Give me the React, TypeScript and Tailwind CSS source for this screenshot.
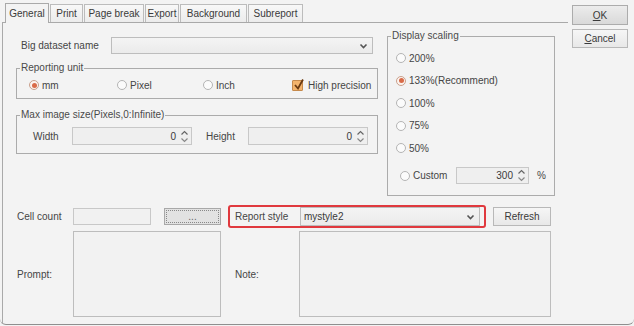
import React from "react";

const Chevron = () => (
  <svg width="9" height="6" viewBox="0 0 9 6">
    <path d="M1.5 1.5 L4.5 4.5 L7.5 1.5" fill="none" stroke="#555" strokeWidth="1.6" />
  </svg>
);

const Spin = () => (
  <svg width="9" height="15" viewBox="0 0 9 15">
    <path d="M1.5 5.5 L4.5 2.5 L7.5 5.5" fill="none" stroke="#666" strokeWidth="1.2" />
    <path d="M1.5 9.5 L4.5 12.5 L7.5 9.5" fill="none" stroke="#888" strokeWidth="1.2" />
  </svg>
);

function Radio({ checked, label, className = "" }: { checked?: boolean; label: string; className?: string }) {
  return (
    <div className={"flex items-center gap-[3px] h-[14px] " + className}>
      <span
        className={
          checked
            ? "w-[10px] h-[10px] rounded-full border border-[#c9a08c] bg-[#fbf3ef] flex items-center justify-center"
            : "w-[10px] h-[10px] rounded-full border border-[#b4b4b4] bg-[#fbfbfb]"
        }
      >
        {checked && <span className="w-[5px] h-[5px] rounded-full bg-[#d96b48]" />}
      </span>
      <span>{label}</span>
    </div>
  );
}

function Tab({ label, w, active }: { label: string; w: string; active?: boolean }) {
  return (
    <div
      className={
        active
          ? `${w} h-[20px] -mb-px relative z-10 border-t border-l border-r border-[#a9a9a9] bg-[#f3f3f3] flex items-center justify-center text-[#3a3a3a]`
          : `${w} h-[18px] border-t border-l border-r border-[#bcbcbc] bg-gradient-to-b from-[#f8f8f8] to-[#ececec] flex items-center justify-center text-[#3a3a3a]`
      }
    >
      {label}
    </div>
  );
}

function Select({ w, h, value = "" }: { w: string; h: string; value?: string }) {
  return (
    <div className={`${w} ${h} border border-[#bdbdbd] bg-gradient-to-b from-[#f4f4f4] to-[#ebebeb] flex items-center justify-between pl-[3px] pr-[4px] text-[#3a3a3a]`}>
      <span>{value}</span>
      <Chevron />
    </div>
  );
}

function SpinBox({ w, value }: { w: string; value: string }) {
  return (
    <div className={`${w} h-[18px] border border-[#c8c8c8] bg-[#efefef] flex items-center justify-end pr-[2px] gap-[4px] text-[#3a3a3a]`}>
      <span>{value}</span>
      <Spin />
    </div>
  );
}

function Group({ title, className = "", children }: { title: string; className?: string; children: React.ReactNode }) {
  return (
    <fieldset className={"border border-[#ababab] " + className}>
      <legend className="ml-[3px] px-[1px] leading-[12px] text-[#4a4a4a]">{title}</legend>
      {children}
    </fieldset>
  );
}

export default function App() {
  return (
    <div className="w-[634px] h-[326px] bg-[#f3f3f3] font-['Liberation_Sans',Arial,sans-serif] text-[10px] text-[#454545]">
      <div className="w-[634px] h-[325px] flex border-b border-[#8f8f8f] rounded-b-[6px]">
        {/* left: tabs + panel */}
        <div className="w-[568px] pl-[2px] flex flex-col">
          <div className="h-[22px] pt-[3px] pl-[3px] flex items-end gap-[1px]">
            <Tab label="General" w="w-[44px]" active />
            <Tab label="Print" w="w-[33px]" />
            <Tab label="Page break" w="w-[60px]" />
            <Tab label="Export" w="w-[34px]" />
            <Tab label="Background" w="w-[67px]" />
            <Tab label="Subreport" w="w-[55px]" />
          </div>
          <div className="flex-1 border-t border-l border-[#a9a9a9] flex flex-col">
            {/* top section */}
            <div className="flex items-start">
              <div className="ml-[13px] w-[362px] flex flex-col">
                <div className="mt-[14px] h-[17px] flex items-center">
                  <span className="w-[95px] pl-[5px]">Big dataset name</span>
                  <Select w="w-[262px]" h="h-[17px]" />
                </div>
                <Group title="Reporting unit" className="mt-[8px]">
                  <div className="pt-[4px] pb-[6px] pl-[12px] flex items-center">
                    <Radio checked label="mm" className="w-[88px]" />
                    <Radio label="Pixel" className="w-[86px]" />
                    <Radio label="Inch" className="w-[89px]" />
                    <div className="flex items-center gap-[5px] h-[14px]">
                      <span className="w-[11px] h-[11px] rounded-[1px] border border-[#c68a4c] bg-[#f4b46c] relative">
                        <svg width="12" height="13" viewBox="0 0 12 13" className="absolute left-[0px] top-[-3px]">
                          <path d="M2 7 L5 10.5 L10 1.5" fill="none" stroke="#6a3a12" strokeWidth="1.8" />
                        </svg>
                      </span>
                      <span>High precision</span>
                    </div>
                  </div>
                </Group>
                <Group title="Max image size(Pixels,0:Infinite)" className="mt-[10px]">
                  <div className="pt-[6px] pb-[8px] pl-[16px] flex items-center">
                    <span className="w-[39px]">Width</span>
                    <SpinBox w="w-[120px]" value="0" />
                    <span className="ml-[14px] w-[42px]">Height</span>
                    <SpinBox w="w-[120px]" value="0" />
                  </div>
                </Group>
              </div>
              <Group title="Display scaling" className="ml-[9px] mt-[7px] w-[168px]">
                <div className="pt-[9px] pb-[11px] flex flex-col">
                  <div className="pl-[8px] flex flex-col gap-[8.5px]">
                    <Radio label="200%" />
                    <Radio checked label="133%(Recommend)" />
                    <Radio label="100%" />
                    <Radio label="75%" />
                    <Radio label="50%" />
                  </div>
                  <div className="mt-[12px] pl-[12px] h-[17px] flex items-center">
                    <Radio label="Custom" className="w-[56px]" />
                    <div className="w-[73px] h-[17px] border border-[#c8c8c8] bg-[#efefef] flex items-center justify-end pr-[2px] gap-[4px] text-[#3a3a3a]">
                      <span>300</span>
                      <Spin />
                    </div>
                    <span className="ml-[8px]">%</span>
                  </div>
                </div>
              </Group>
            </div>

            {/* cell count row */}
            <div className="mt-[9px] h-[23px] pl-[14px] flex items-center">
              <span className="w-[56px]">Cell count</span>
              <div className="w-[78px] h-[17px] border border-[#c8c8c8] bg-[#f1f1f1]" />
              <div className="ml-[13px] w-[57px] h-[17px] border border-[#a8a8a8] bg-[#e2e2e2] p-[1px] flex">
                <div className="flex-1 border border-dotted border-[#888] flex items-center justify-center leading-none text-[#666]">
                  ...
                </div>
              </div>
              <div className="ml-[7px] w-[258px] h-[23px] border-2 border-[#e0393e] rounded-[3px] pl-[5px] pr-[4px] flex items-center">
                <span className="w-[65px]">Report style</span>
                <Select w="w-[180px]" h="h-[19px]" value="mystyle2" />
              </div>
              <div className="ml-[7px] w-[58px] h-[19px] border border-[#b8b8b8] bg-gradient-to-b from-[#f6f6f6] to-[#e8e8e8] flex items-center justify-center text-[#3a3a3a]">
                Refresh
              </div>
            </div>

            {/* prompt / note row */}
            <div className="mt-[3px] pl-[14px] flex items-center">
              <span className="w-[56px]">Prompt:</span>
              <div className="w-[148px] h-[86px] border border-[#bdbdbd] bg-[#f2f2f2]" />
              <span className="ml-[14px] w-[64px]">Note:</span>
              <div className="w-[252px] h-[86px] border border-[#bdbdbd] bg-[#f2f2f2]" />
            </div>
          </div>
        </div>

        {/* right: buttons */}
        <div className="ml-[4px] pt-[5px] w-[56px] flex flex-col gap-[4px]">
          <div className="h-[20px] border border-[#acacac] bg-gradient-to-b from-[#ececec] to-[#d9d9d9] flex items-center justify-center text-[#3a3a3a]">
            <span>
              <span className="underline underline-offset-1">O</span>K
            </span>
          </div>
          <div className="h-[19px] border border-[#b8b8b8] bg-gradient-to-b from-[#f6f6f6] to-[#e8e8e8] flex items-center justify-center text-[#3a3a3a]">
            <span>
              <span className="underline underline-offset-1">C</span>ancel
            </span>
          </div>
        </div>
      </div>
    </div>
  );
}
